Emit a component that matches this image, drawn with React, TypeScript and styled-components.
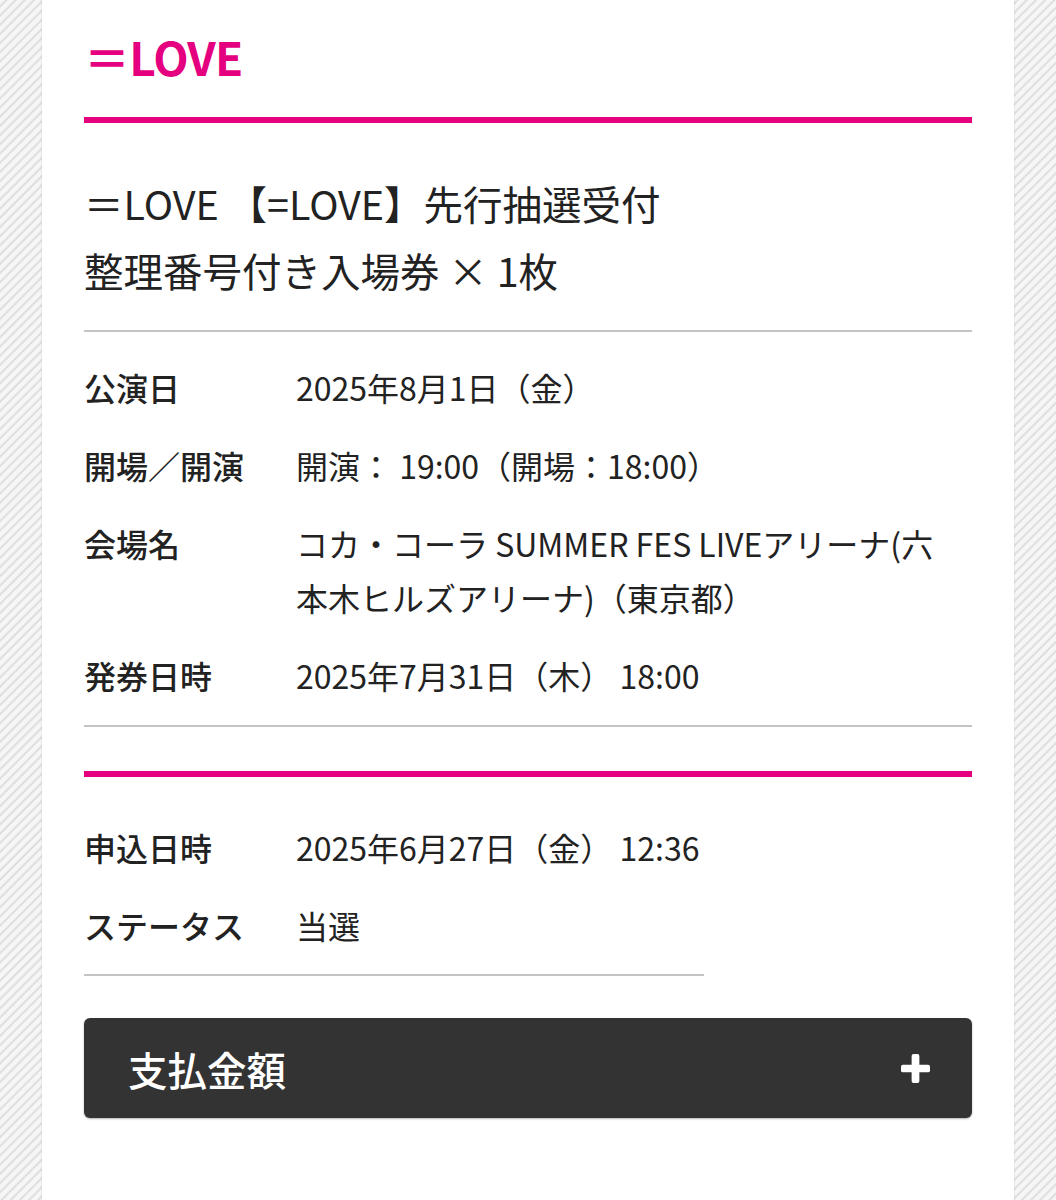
import React from 'react';
import styled, { createGlobalStyle } from 'styled-components';

const GlobalStyle = createGlobalStyle`
  html, body {
    margin: 0;
    padding: 0;
  }
  body {
    font-family: "Noto Sans CJK JP", "Noto Sans", sans-serif;
    color: #222;
    background: repeating-linear-gradient(
      -45deg,
      #f6f6f6 0px,
      #f6f6f6 3px,
      #dadada 4.5px,
      #f6f6f6 6.5px
    );
  }
`;

const detailRows = [
  { label: '公演日', value: '2025年8月1日（金）' },
  { label: '開場／開演', value: '開演： 19:00（開場：18:00）' },
  { label: '会場名', value: 'コカ・コーラ SUMMER FES LIVEアリーナ(六本木ヒルズアリーナ)（東京都）' },
  { label: '発券日時', value: '2025年7月31日（木） 18:00' },
];

const applyRows = [
  { label: '申込日時', value: '2025年6月27日（金） 12:36' },
  { label: 'ステータス', value: '当選' },
];

const App: React.FC = () => {
  return (
    <>
      <GlobalStyle />
      <Page>
        <Sheet>
          <ArtistName>＝LOVE</ArtistName>
          <PinkBar />
          <TicketTitle>
            ＝LOVE 【=LOVE】先行抽選受付
            <br />
            整理番号付き入場券 × 1枚
          </TicketTitle>
          <GrayRule />
          <InfoList>
            {detailRows.map(row => (
              <InfoRow key={row.label}>
                <Label>{row.label}</Label>
                <Value>{row.value}</Value>
              </InfoRow>
            ))}
          </InfoList>
          <GrayRule $top={23} />
          <PinkBar $top={44} />
          <InfoList $top={43}>
            {applyRows.map(row => (
              <InfoRow key={row.label}>
                <Label>{row.label}</Label>
                <Value>{row.value}</Value>
              </InfoRow>
            ))}
          </InfoList>
          <GrayRule $top={22} $width={620} />
          <AccordionButton type="button">
            <span>支払金額</span>
            <PlusIcon viewBox="0 0 30 30">
              <rect x="11" y="0" width="8" height="30" rx="2" fill="#fff" />
              <rect x="0" y="11" width="30" height="8" rx="2" fill="#fff" />
            </PlusIcon>
          </AccordionButton>
        </Sheet>
      </Page>
    </>
  );
};

const Page = styled.div`
  display: flex;
  justify-content: center;
  min-height: 1200px;
`;

const Sheet = styled.div`
  width: 972px;
  box-sizing: border-box;
  background: #fff;
  padding: 26px 42px 80px;
  box-shadow: 0 0 2px rgba(0, 0, 0, 0.12);
  display: flex;
  flex-direction: column;
`;

const ArtistName = styled.h1`
  margin: 0;
  font-family: "Noto Sans CJK JP", "Noto Sans", sans-serif;
  font-size: 46px;
  line-height: 60px;
  font-weight: 700;
  color: #e4007f;
  letter-spacing: -0.8px;
`;

const PinkBar = styled.div<{ $top?: number }>`
  height: 6px;
  background: #e4007f;
  margin-top: ${p => p.$top ?? 31}px;
`;

const TicketTitle = styled.h2`
  margin: 46px 0 0;
  font-size: 39.5px;
  line-height: 67px;
  font-weight: 400;
  color: #222;
`;

const GrayRule = styled.div<{ $top?: number; $width?: number }>`
  height: 2px;
  background: #c4c4c4;
  margin-top: ${p => p.$top ?? 27}px;
  width: ${p => (p.$width ? `${p.$width}px` : '100%')};
`;

const InfoList = styled.dl<{ $top?: number }>`
  margin: ${p => p.$top ?? 28}px 0 0;
  display: flex;
  flex-direction: column;
  gap: 24px;
`;

const InfoRow = styled.div`
  display: grid;
  grid-template-columns: 212px 1fr;
  font-size: 32px;
  line-height: 54px;
`;

const Label = styled.dt`
  font-weight: 500;
  color: #222;
`;

const Value = styled.dd`
  margin: 0;
  color: #222;
  padding-right: 10px;
`;

const AccordionButton = styled.button`
  margin-top: 42px;
  height: 100px;
  border: none;
  border-radius: 6px;
  background: #333;
  color: #fff;
  display: flex;
  align-items: center;
  justify-content: space-between;
  padding: 0 42px 0 44px;
  font-family: "Noto Sans CJK JP", "Noto Sans", sans-serif;
  font-size: 39.5px;
  font-weight: 500;
  box-shadow: 0 1px 2px rgba(0, 0, 0, 0.3);
`;

const PlusIcon = styled.svg`
  width: 29px;
  height: 29px;
`;

export default App;
